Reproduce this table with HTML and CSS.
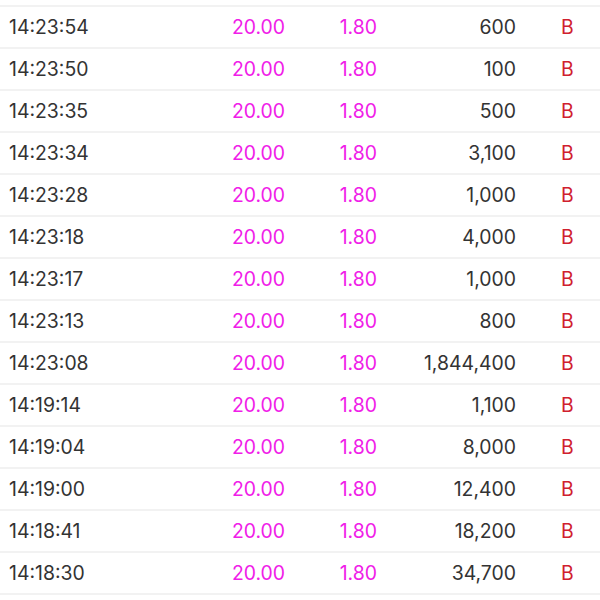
FILE: index.html
```html
<!DOCTYPE html>
<html>
<head>
<meta charset="utf-8">
<link rel="stylesheet" href="styles.css">
</head>
<body>
<div class="list">
  <div class="row"><span class="time">14:23:54</span><span class="price">20.00</span><span class="chg">1.80</span><span class="vol">600</span><span class="side">B</span></div>
  <div class="row"><span class="time">14:23:50</span><span class="price">20.00</span><span class="chg">1.80</span><span class="vol">100</span><span class="side">B</span></div>
  <div class="row"><span class="time">14:23:35</span><span class="price">20.00</span><span class="chg">1.80</span><span class="vol">500</span><span class="side">B</span></div>
  <div class="row"><span class="time">14:23:34</span><span class="price">20.00</span><span class="chg">1.80</span><span class="vol">3,100</span><span class="side">B</span></div>
  <div class="row"><span class="time">14:23:28</span><span class="price">20.00</span><span class="chg">1.80</span><span class="vol">1,000</span><span class="side">B</span></div>
  <div class="row"><span class="time">14:23:18</span><span class="price">20.00</span><span class="chg">1.80</span><span class="vol">4,000</span><span class="side">B</span></div>
  <div class="row"><span class="time">14:23:17</span><span class="price">20.00</span><span class="chg">1.80</span><span class="vol">1,000</span><span class="side">B</span></div>
  <div class="row"><span class="time">14:23:13</span><span class="price">20.00</span><span class="chg">1.80</span><span class="vol">800</span><span class="side">B</span></div>
  <div class="row"><span class="time">14:23:08</span><span class="price">20.00</span><span class="chg">1.80</span><span class="vol">1,844,400</span><span class="side">B</span></div>
  <div class="row"><span class="time">14:19:14</span><span class="price">20.00</span><span class="chg">1.80</span><span class="vol">1,100</span><span class="side">B</span></div>
  <div class="row"><span class="time">14:19:04</span><span class="price">20.00</span><span class="chg">1.80</span><span class="vol">8,000</span><span class="side">B</span></div>
  <div class="row"><span class="time">14:19:00</span><span class="price">20.00</span><span class="chg">1.80</span><span class="vol">12,400</span><span class="side">B</span></div>
  <div class="row"><span class="time">14:18:41</span><span class="price">20.00</span><span class="chg">1.80</span><span class="vol">18,200</span><span class="side">B</span></div>
  <div class="row"><span class="time">14:18:30</span><span class="price">20.00</span><span class="chg">1.80</span><span class="vol">34,700</span><span class="side">B</span></div>
</div>
</body>
</html>
```
FILE: styles.css
```css
html, body {
  margin: 0;
  padding: 0;
  background: #ffffff;
}
body {
  font-family: Inter, "Noto Sans", sans-serif;
  font-size: 19.4px;
  color: #333333;
}
.list {
  padding-top: 5px;
}
.row {
  display: grid;
  grid-template-columns: 276px 92px 139px 1fr;
  align-items: center;
  height: 40px;
  border-top: 2px solid #f2f2f2;
  padding-left: 9px;
}
.row:last-child {
  border-bottom: 2px solid #f2f2f2;
}
.time {
  grid-column: 1;
  grid-row: 1;
  color: #333333;
}
.price {
  grid-column: 1;
  grid-row: 1;
  text-align: right;
  color: #f020e8;
}
.chg {
  text-align: right;
  color: #f020e8;
}
.vol {
  text-align: right;
  color: #333333;
}
.side {
  color: #d0202e;
  padding-left: 45px;
}
```
